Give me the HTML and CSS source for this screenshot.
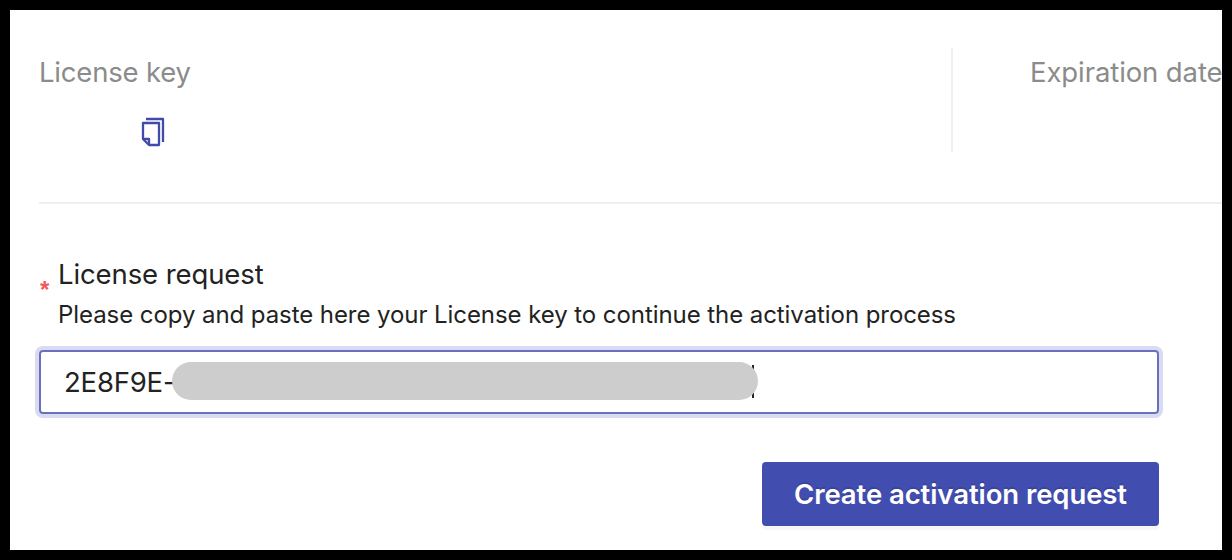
FILE: index.html
```html
<!DOCTYPE html>
<html lang="en">
<head>
<meta charset="utf-8">
<title>License activation</title>
<link rel="stylesheet" href="styles.css">
</head>
<body>
<main class="panel">
  <section class="summary">
    <div class="key">
      <div class="label key-label">License key</div>
      <svg class="copy" width="24" height="30" viewBox="0 0 24 30" fill="none" stroke="#424ca8" stroke-width="2.3" stroke-linejoin="round">
        <path d="M5 2H22V25"/>
        <path d="M2 6H18V28H8L2 22Z"/>
        <path d="M2 22H8V28"/>
      </svg>
    </div>
    <div class="expiration"><div class="label exp-label">Expiration date</div></div>
  </section>
  <section class="form">
    <div class="heading">
      <span class="required">*</span>
      <div>
        <div class="title">License request</div>
        <div class="hint">Please copy and paste here your License key to continue the activation process</div>
      </div>
    </div>
    <div class="field"><span class="value">2E8F9E-</span><span class="caret"></span><span class="mask"></span></div>
    <div class="actions"><button class="submit"><span class="submit-text">Create activation request</span></button></div>
  </section>
</main>
</body>
</html>
```
FILE: styles.css
```css
* { box-sizing: border-box; }
body { margin: 0; width: 1232px; height: 560px; overflow: hidden; background: #000; padding: 10px; font-family: Inter, sans-serif; }
.panel { width: 1212px; height: 540px; background: #fff; overflow: hidden; padding: 38px 0 0 29px; }
.summary { display: flex; height: 156px; border-bottom: 2px solid #efefef; }
.key { width: 912px; flex: none; }
.label { color: #8b8b8b; font-size: 27.5px; letter-spacing: -0.2px; line-height: 32px; padding-top: 8px; white-space: nowrap; }
.copy { display: block; margin: 29px 0 0 102px; }
.expiration { height: 104px; border-left: 2px solid #efefef; padding-left: 77px; }
.exp-label { letter-spacing: -0.1px; }
.form { width: 1120px; padding-top: 54px; }
.heading { display: flex; height: 92px; }
.required { width: 19px; color: #f5585c; font: 700 24px/24px "Liberation Sans", sans-serif; padding: 20px 0 0 1px; }
.title { font-size: 27.5px; letter-spacing: -0.1px; line-height: 32px; color: #222; }
.hint { font-size: 24px; letter-spacing: -0.07px; line-height: 28px; margin-top: 11px; color: #222; white-space: nowrap; }
.field { position: relative; height: 64px; border: 2px solid #6870bf; border-radius: 4px; box-shadow: 0 0 0 4px #d9dbf1; padding-left: 23px; font-size: 27.5px; letter-spacing: -0.2px; line-height: 61px; color: #222; }
.mask { position: absolute; left: 131px; top: 10px; width: 586px; height: 38px; border-radius: 19px; background: #cdcdcd; }
.caret { position: absolute; left: 711px; top: 13px; width: 2px; height: 33px; background: #222; }
.actions { display: flex; justify-content: flex-end; padding-top: 48px; }
.submit { width: 397px; height: 64px; padding: 0; border: 0; border-radius: 4px; background: #424db0; box-shadow: 0 4px 0 rgba(0,0,0,.03); color: #fff; font: 600 27.5px/62px Inter, sans-serif; letter-spacing: -0.08px; text-shadow: 0 -2px 0 rgba(0,0,0,.12); white-space: nowrap; }
```
